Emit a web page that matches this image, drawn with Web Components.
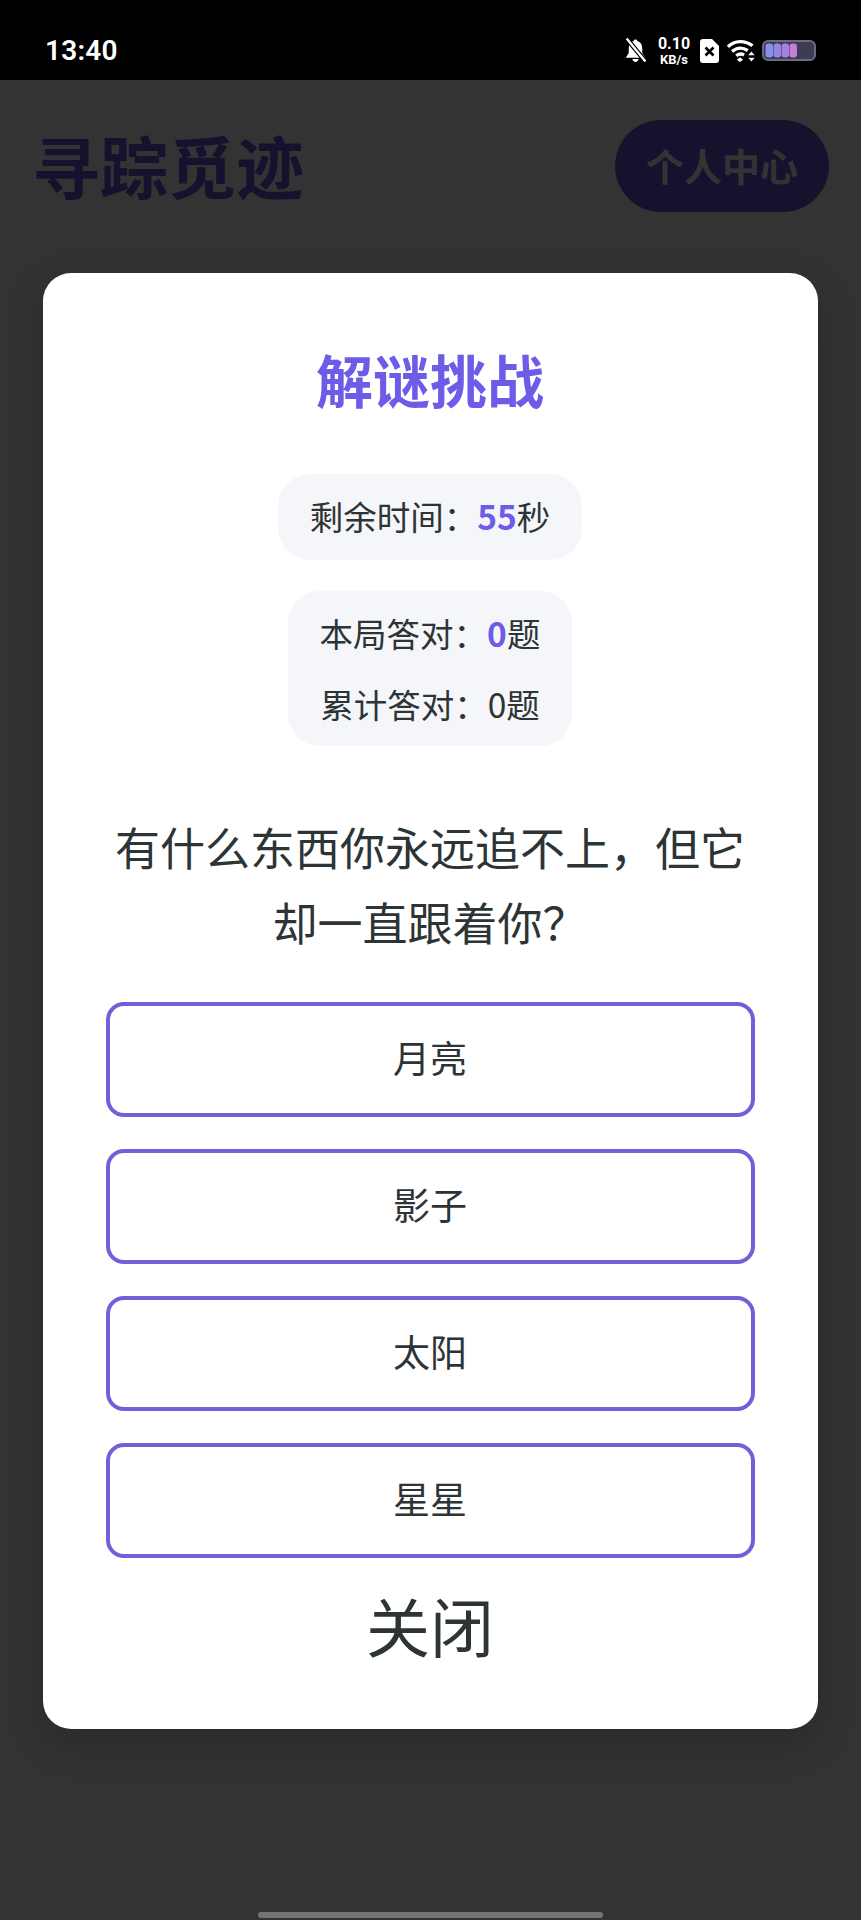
<!DOCTYPE html>
<html lang="zh">
<head>
<meta charset="utf-8">
<title>寻踪觅迹</title>
<style>
  html, body { margin: 0; height: 100%; }
  body {
    background: #fff;
    font-family: "Noto Sans CJK SC", "Noto Sans", sans-serif;
    color: #2d3436;
  }
  stat-box b { color: #6c5ce7; font-weight: 700; }
</style>
</head>
<body>
<phone-screen>
  <status-bar slot="status"></status-bar>
  <app-header slot="header"></app-header>
  <puzzle-modal slot="modal">
    <stat-box><span>剩余时间：<b>55</b>秒</span></stat-box>
    <stat-box slot="stats" tight>
      <span>本局答对：<b>0</b>题</span>
      <span>累计答对：0题</span>
    </stat-box>
    <option-button slot="options">月亮</option-button>
    <option-button slot="options">影子</option-button>
    <option-button slot="options">太阳</option-button>
    <option-button slot="options">星星</option-button>
  </puzzle-modal>
</phone-screen>

<script>
class PhoneScreen extends HTMLElement {
  constructor() {
    super();
    this.attachShadow({ mode: 'open' });
    this.shadowRoot.innerHTML = `
    <style>
      :host { display: flex; flex-direction: column; height: 1920px; position: relative; overflow: hidden; }
      .overlay {
        position: absolute; left: 0; right: 0; top: 80px; bottom: 0;
        padding: 2px 1px 0 0;
        background: rgba(0,0,0,.8);
        display: flex; align-items: center; justify-content: center;
      }
      .home {
        position: absolute; left: 258px; bottom: 2px; width: 345px; height: 6px;
        border-radius: 3px; background: #757575;
      }
    </style>
    <slot name="status"></slot>
    <slot name="header"></slot>
    <div class="overlay"><slot name="modal"></slot></div>
    <div class="home"></div>
    `;
  }
}

class StatusBar extends HTMLElement {
  constructor() {
    super();
    this.attachShadow({ mode: 'open' });
    this.shadowRoot.innerHTML = `
    <style>
      :host {
        display: flex; align-items: center; justify-content: space-between;
        height: 80px; box-sizing: border-box; padding: 21px 45px 0 45px;
        background: #000; color: #fff; font-family: Roboto, sans-serif;
      }
      .time { font-size: 28px; font-weight: 600; letter-spacing: .2px; }
      .icons { display: flex; align-items: center; gap: 0; }
      .speed { width: 34px; margin: 0 9px 0 11px; text-align: center; font-weight: 700; line-height: 1; }
      .speed div:first-child { font-size: 16px; }
      .speed div:last-child { font-size: 13px; margin-top: 1px; white-space: nowrap; }
      svg { display: block; }
    </style>
    <div class="time">13:40</div>
    <div class="icons">
      <svg width="21" height="25" viewBox="0 0 20 24">
        <path fill="#fff" d="M10 1.500c1 0 1.600.6 1.800 1.400C15 3.800 16.500 6.500 16.500 10v4.500l2.800 4.500H.7l2.800-4.500V10c0-3.500 1.500-6.200 4.700-7.100C8.400 2.100 9 1.500 10 1.500zM7 20.200h6c-.3 1.700-1.500 2.800-3 2.800s-2.700-1.100-3-2.800z"/>
        <path stroke="#000" stroke-width="4.500" d="M1 0l19 23"/>
        <path stroke="#fff" stroke-width="2.200" d="M1.500 .5l18 22"/>
      </svg>
      <div class="speed"><div>0.10</div><div>KB/s</div></div>
      <svg width="19" height="24" viewBox="0 0 19 24" style="margin-right:7px">
        <path fill="#fff" d="M3 0h9l7 7v14a3 3 0 0 1-3 3H3a3 3 0 0 1-3-3V3a3 3 0 0 1 3-3z"/>
        <path stroke="#000" stroke-width="2.600" d="M5.500 8.500l8 8M13.500 8.500l-8 8"/>
      </svg>
      <svg width="30" height="23" viewBox="0 0 28 22" style="margin-right:6px" fill="none" stroke="#fff" stroke-width="3.200">
        <path d="M1.500 7.500C8 1 18 1 25 6.500"/>
        <path d="M5.500 12c4.500-4 10-4 15-1"/>
        <path d="M9.500 16c2.500-2 5-2 7.500-.8"/>
        <path fill="#fff" stroke="none" d="M13 17.500l3 2.300-3 2.200-3-2.200zM24 12l3 3.600h-6zM24 21.500l3-3.600h-6z"/>
      </svg>
      <svg width="54" height="21" viewBox="0 0 54 21">
        <rect x="1" y="1" width="52" height="19" rx="5" fill="#3c3c55" stroke="#6c6c80" stroke-width="2"/>
        <rect x="3.500" y="3.500" width="7.500" height="14" rx="3" fill="#8790ea"/>
        <rect x="11.500" y="3.500" width="7.500" height="14" rx="3" fill="#9486e6"/>
        <rect x="19.500" y="3.500" width="7.500" height="14" rx="3" fill="#a67fdf"/>
        <rect x="27.500" y="3.500" width="7.500" height="14" rx="3" fill="#c47fd8"/>
      </svg>
    </div>
    `;
  }
}

class AppHeader extends HTMLElement {
  constructor() {
    super();
    this.attachShadow({ mode: 'open' });
    this.shadowRoot.innerHTML = `
    <style>
      :host {
        display: flex; align-items: center; justify-content: space-between;
        padding: 40px 32px 0 32px;
      }
      h1 { margin: 0 0 2px; font-size: 68px; font-weight: 700; color: #6c5ce7; line-height: 90px; }
      button {
        height: 92px; width: 214px; padding: 0 0 4px; border: 0; border-radius: 46px;
        background: #6c5ce7; color: #fff; font: inherit; font-size: 38px; font-weight: 700;
      }
    </style>
    <h1>寻踪觅迹</h1>
    <button>个人中心</button>
    `;
  }
}

class PuzzleModal extends HTMLElement {
  constructor() {
    super();
    const template = document.createElement('template');
    template.innerHTML = `
    <style>
      :host {
        display: flex; flex-direction: column; align-items: center;
        box-sizing: border-box; width: 775px; height: 1456px;
        padding: 67px 63px 0 63px;
        background: #fff; border-radius: 28px;
        box-shadow: 0 14px 40px rgba(0,0,0,.2);
      }
      h2 { margin: 0 0 58px; font-size: 57px; font-weight: 700; line-height: 76px; color: #6c5ce7; }
      .stats { margin-top: 31px; }
      p { margin: 63px 0 43px; font-size: 45px; line-height: 75px; text-align: center; width: 100%; }
      .options { display: flex; flex-direction: column; gap: 32px; width: 100%; }
      .close {
        margin-top: 20px; border: 0; background: none; padding: 0;
        font: inherit; font-size: 64px; line-height: 92px; color: #2d3436;
      }
    </style>
    <h2>解谜挑战</h2>
    <slot></slot>
    <div class="stats"><slot name="stats"></slot></div>
    <p>有什么东西你永远追不上，但它却一直跟着你？</p>
    <div class="options"><slot name="options"></slot></div>
    <button class="close">关闭</button>
    `;
    this.attachShadow({ mode: 'open' });
    this.shadowRoot.appendChild(template.content.cloneNode(true));
  }
}

class StatBox extends HTMLElement {
  constructor() {
    super();
    this.attachShadow({ mode: 'open' });
    this.shadowRoot.innerHTML = `
    <style>
      :host {
        display: flex; flex-direction: column; align-items: center;
        box-sizing: border-box; padding: 14px 32px 16px;
        background: #f5f6fa; border-radius: 32px;
        font-size: 33.500px; line-height: 56px;
        white-space: nowrap;
      }
      :host([tight]) { padding: 14px 32px; row-gap: 15px; }
      ::slotted(span) { display: block; }
    </style>
    <slot></slot>
    `;
  }
}

class OptionButton extends HTMLElement {
  constructor() {
    super();
    this.attachShadow({ mode: 'open' });
    this.shadowRoot.innerHTML = `
    <style>
      :host { display: block; }
      button {
        display: block; width: 100%; height: 115px; box-sizing: border-box;
        padding: 0 0 5px;
        border: 4px solid #6f62d6; border-radius: 18px; background: #fff;
        font: inherit; font-size: 37px; color: #2d3436;
      }
    </style>
    <button><slot></slot></button>
    `;
  }
}

customElements.define('phone-screen', PhoneScreen);
customElements.define('status-bar', StatusBar);
customElements.define('app-header', AppHeader);
customElements.define('puzzle-modal', PuzzleModal);
customElements.define('stat-box', StatBox);
customElements.define('option-button', OptionButton);
</script>
</body>
</html>
